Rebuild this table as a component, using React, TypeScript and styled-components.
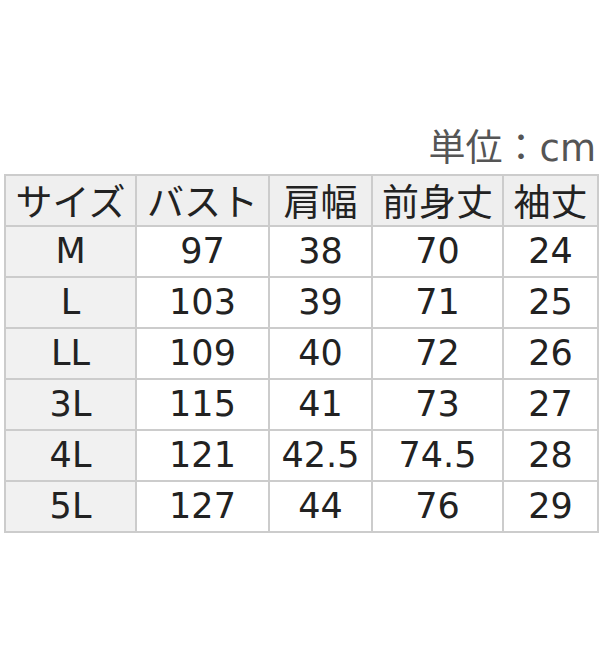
import styled, { createGlobalStyle } from "styled-components";

const GlobalStyle = createGlobalStyle`
  body {
    margin: 0;
    background: #FFFFFF;
    font-family: "DejaVu Sans", "Noto Sans CJK JP", sans-serif;
  }
`;

const Page = styled.div`
  width: 600px;
  height: 660px;
  padding-top: 124px;
  box-sizing: border-box;
`;

const Unit = styled.div`
  text-align: right;
  padding-right: 4px;
  font-size: 37px;
  line-height: 50px;
  color: #555555;
  font-family: "DejaVu Sans", "Noto Sans CJK JP", sans-serif;
`;

const SizeTable = styled.table`
  margin-left: 4px;
  width: 593px;
  border-collapse: collapse;
  table-layout: fixed;
  color: #222222;
`;

const HeadCell = styled.th`
  height: 49px;
  padding: 0;
  border: 2px solid #cccccc;
  background: #efefef;
  font-weight: normal;
  font-size: 37px;
  line-height: 1;
  text-align: center;
  white-space: nowrap;
  font-family: "Noto Sans CJK JP", "DejaVu Sans", sans-serif;
`;

const Cell = styled.td<{ $label?: boolean }>`
  height: 49px;
  padding: 0;
  border: 2px solid #cccccc;
  background: ${(p) => (p.$label ? "#f1f1f1" : "#ffffff")};
  font-size: 35px;
  line-height: 1;
  text-align: center;
  white-space: nowrap;
`;

const columns = [
  { title: "サイズ", width: 131 },
  { title: "バスト", width: 133 },
  { title: "肩幅", width: 103 },
  { title: "前身丈", width: 131 },
  { title: "袖丈", width: 95 },
];

const rows = [
  ["M", "97", "38", "70", "24"],
  ["L", "103", "39", "71", "25"],
  ["LL", "109", "40", "72", "26"],
  ["3L", "115", "41", "73", "27"],
  ["4L", "121", "42.5", "74.5", "28"],
  ["5L", "127", "44", "76", "29"],
];

export default function App() {
  return (
    <Page>
      <GlobalStyle />
      <Unit>単位：cm</Unit>
      <SizeTable>
        <colgroup>
          {columns.map((c) => (
            <col key={c.title} style={{ width: c.width }} />
          ))}
        </colgroup>
        <thead>
          <tr>
            {columns.map((c) => (
              <HeadCell key={c.title}>{c.title}</HeadCell>
            ))}
          </tr>
        </thead>
        <tbody>
          {rows.map((row) => (
            <tr key={row[0]}>
              {row.map((v, i) => (
                <Cell key={i} $label={i === 0}>{v}</Cell>
              ))}
            </tr>
          ))}
        </tbody>
      </SizeTable>
    </Page>
  );
}
